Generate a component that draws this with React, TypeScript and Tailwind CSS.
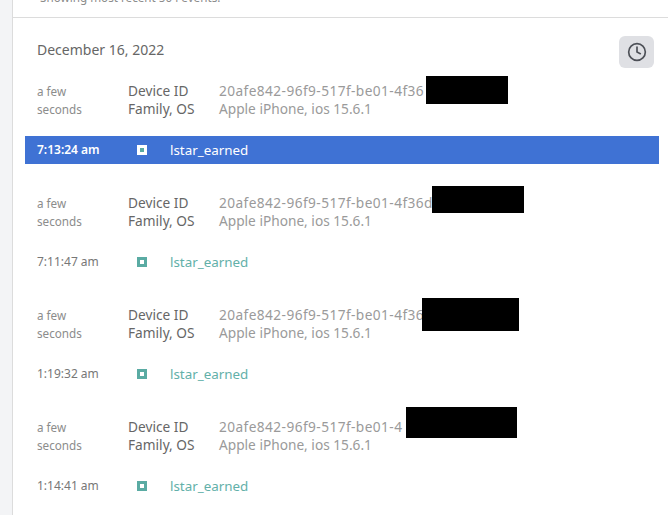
import { Clock } from "lucide-react";

const events = [
  { id: "20afe842-96f9-517f-be01-4f36", time: "7:13:24 am", active: true, box: "left-[207px] top-[-6px] h-[28px] w-[82px]" },
  { id: "20afe842-96f9-517f-be01-4f36d", time: "7:11:47 am", active: false, box: "left-[213px] top-[-8px] h-[27px] w-[92px]" },
  { id: "20afe842-96f9-517f-be01-4f36", time: "1:19:32 am", active: false, box: "left-[203px] top-[-8px] h-[33px] w-[97px]" },
  { id: "20afe842-96f9-517f-be01-4", time: "1:14:41 am", active: false, box: "left-[187px] top-[-11px] h-[31px] w-[111px]" },
];

function EventBlock({ id, time, active, box }: { id: string; time: string; active: boolean; box: string }) {
  return (
    <div className="h-[112px]">
      <div className="flex pl-[12px]">
        <div className="w-[91px] text-[11.7px] leading-[18px] text-[#8c8c8c]">
          a few
          <br />
          seconds
        </div>
        <div className="w-[91px] text-[13.7px] leading-[18px] text-[#666666]">
          Device ID
          <br />
          Family, OS
        </div>
        <div className="relative text-[13.7px] leading-[18px] text-[#9a9a9a]">
          <div className="tracking-[0.42px]">{id}</div>
          <div>Apple iPhone, ios 15.6.1</div>
          <div className={`absolute bg-black ${box}`} />
        </div>
      </div>
      <div
        className={`mt-[18px] flex h-[28px] items-center pl-[12px] ${active ? "bg-[#3f72d4] text-white" : "text-[#62b0a9]"}`}
      >
        <div className={`w-[100px] text-[12px] ${active ? "font-semibold text-white" : "text-[#777777]"}`}>{time}</div>
        <div className={`flex h-[10px] w-[10px] items-center justify-center ${active ? "bg-white" : "bg-[#5aaba3]"}`}>
          <div className={`h-[4px] w-[4px] ${active ? "bg-[#5aaba3]" : "bg-white"}`} />
        </div>
        <div className="ml-[23px] text-[13.4px]">lstar_earned</div>
      </div>
    </div>
  );
}

export default function App() {
  return (
    <div className="flex h-[515px] w-[668px] overflow-hidden bg-white font-['Noto_Sans',sans-serif]">
      <div className="w-[12px] shrink-0 bg-[#f3f4f6]" />
      <div className="min-w-0 flex-1 border-l border-[#dcdcdc]">
        <div className="h-[18px] overflow-hidden border-b border-[#dcdcdc] pl-[27px]">
          <div className="mt-[-12px] text-[11.7px] leading-[18px] text-[#8c8c8c]">Showing most recent 50 i events.</div>
        </div>
        <div className="flex items-start justify-between pl-[24px] pr-[14px] pt-[18px]">
          <div className="pt-[4px] text-[14px] leading-[20px] text-[#666666]">December 16, 2022</div>
          <div className="flex h-[32px] w-[35px] items-center justify-center rounded-[6px] bg-[#dfe0e4]">
            <Clock className="h-[20px] w-[20px] text-[#4d5057]" strokeWidth={2} />
          </div>
        </div>
        <div className="ml-[12px] mr-[9px] mt-[14px]">
          {events.map((e) => (
            <EventBlock key={e.time} {...e} />
          ))}
        </div>
      </div>
    </div>
  );
}
